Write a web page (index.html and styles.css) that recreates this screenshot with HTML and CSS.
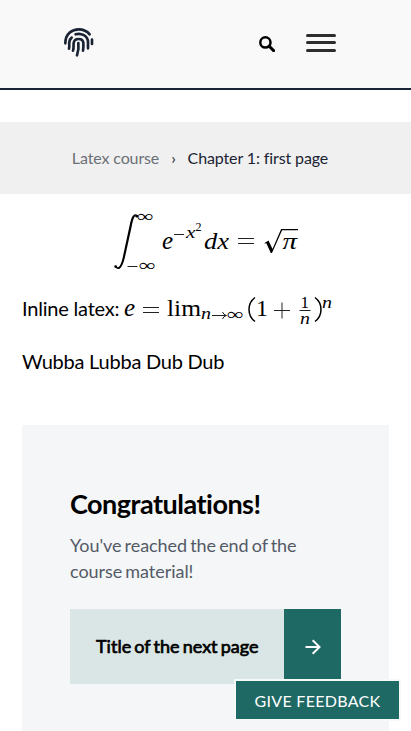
FILE: index.html
```html
<!DOCTYPE html>
<html lang="en">
<head>
<meta charset="utf-8">
<meta name="viewport" content="width=device-width">
<title>Chapter 1: first page</title>
<link rel="stylesheet" href="styles.css">
</head>
<body>
<header class="topbar">
  <svg class="logo" viewBox="0 0 90 90" fill="none" stroke="#1a2333" stroke-width="8" stroke-linecap="round">
    <path d="M4 46C4 16 26 4 44 4c14 0 25 5 33 15"/>
    <path d="M84 35v13"/>
    <path d="M15 62c2-7 0-12 1-20 1-6 3-10 7-13M35 19c16-5 37 4 37 24v18"/>
    <path d="M27 68c3-9 1-15 2-23 2-16 28-16 29 0 1 10 0 15-1 23"/>
    <path d="M43 45c2 16 0 26-4 37"/>
  </svg>
  <svg class="search" viewBox="0 0 16 16" fill="none" stroke="#000" stroke-width="2.5">
    <circle cx="6.4" cy="6.4" r="5.1"/><path d="M10 10l4.6 4.6" stroke-width="3" stroke-linecap="round"/>
  </svg>
  <div class="menu"><span></span><span></span><span></span></div>
</header>
<nav class="crumbs"><a>Latex course</a><span class="sep">›</span><span>Chapter 1: first page</span></nav>
<main>
  <svg class="formula" viewBox="0 -10 190 76" width="190" height="76">
    <path d="M5 55.2c3 3 5-1 7-10L18.7 14C20.7 4 23.5 1.400 26.500 4.500C24 3.500 22.400 7 20.800 15L14 46C11.400 57 8 60 5 57z"/>
    <circle cx="4.700" cy="55.600" r="1.400"/><circle cx="25.800" cy="5.200" r="1.400"/>
    <text x="26" y="10.500" font-size="17" textLength="17" lengthAdjust="spacingAndGlyphs">∞</text>
    <path d="M16.500 55.500h10" class="rule"/>
    <text x="28" y="60" font-size="17" textLength="17" lengthAdjust="spacingAndGlyphs">∞</text>
    <text class="it" x="51" y="37.500" font-size="25">e</text>
    <path d="M63 23.500h10" class="rule"/>
    <text class="it" x="75" y="27" font-size="17" textLength="9.500" lengthAdjust="spacingAndGlyphs">x</text>
    <text x="84.500" y="20" font-size="12">2</text>
    <text class="it" x="93" y="37.500" font-size="24" textLength="25" lengthAdjust="spacingAndGlyphs">dx</text>
    <path d="M127 27.500h16M127 32.500h16" class="rule"/>
    <path d="M153.500 32l4-2.500 4 8.500 8.600-20H187v1.200h-15.900L161 42h-1.200L155.200 32l-1.200.8z"/>
    <text class="it" x="171.500" y="37.500" font-size="24" textLength="14.500" lengthAdjust="spacingAndGlyphs">π</text>
  </svg>
  <p class="inline-math"><span>Inline latex:</span> <svg class="limit" viewBox="0 0 212 40" width="212" height="40">
    <text class="it" x="1" y="26" font-size="25">e</text>
    <path d="M20 17.500h16M20 22.500h16" class="rule"/>
    <text x="44" y="26" font-size="24" textLength="34" lengthAdjust="spacingAndGlyphs">lim</text>
    <text class="it" x="78" y="29" font-size="17" textLength="10" lengthAdjust="spacingAndGlyphs">n</text>
    <path d="M89 25.500h14M99.500 22q1 3 4 3.500q-3 .5-4 3.500" class="rule"/>
    <text x="104" y="30" font-size="17" textLength="17" lengthAdjust="spacingAndGlyphs">∞</text>
    <path d="M132 7.500c-8 6-8 18 0 24" class="paren"/>
    <text x="133" y="26" font-size="24">1</text>
    <path d="M151 20.500h16M159 12.500v16" class="rule"/>
    <text x="177.500" y="18" font-size="17">1</text>
    <path d="M176.500 20.500h11" class="rule"/>
    <text class="it" x="177" y="34" font-size="17" textLength="10" lengthAdjust="spacingAndGlyphs">n</text>
    <path d="M192 7.500c8 6 8 18 0 24" class="paren"/>
    <text class="it" x="199" y="17.500" font-size="17" textLength="10" lengthAdjust="spacingAndGlyphs">n</text>
  </svg></p>
  <p class="copy">Wubba Lubba Dub Dub</p>
  <section class="card">
    <h2>Congratulations!</h2>
    <p>You've reached the end of the course material!</p>
    <a class="next"><span class="title"><span>Title of the next page</span></span><span class="arrow"><svg width="16" height="16" viewBox="0 0 16 16" fill="none" stroke="#fff" stroke-width="2"><path d="M.5 8H14M7.700 1.200L14.500 8l-6.800 6.800"/></svg></span></a>
  </section>
</main>
<button class="feedback">GIVE FEEDBACK</button>
</body>
</html>
```
FILE: styles.css
```css
* { box-sizing: border-box; }
html { overflow: hidden; }
body { margin: 0; height: 731px; overflow: hidden; background: #fff; color: #000; font-family: Lato, sans-serif; }
.topbar { height: 90px; background: #f9f9f9; border-bottom: 2px solid #1a2333; display: flex; align-items: flex-start; padding: 28px 75px 0 64px; }
.logo { width: 30px; height: 30px; }
.search { width: 16px; height: 16px; margin: 8px 0 0 165px; }
.menu { display: flex; flex-direction: column; gap: 4px; width: 30px; margin: 6px 0 0 31px; }
.menu span { height: 3px; border-radius: 2px; background: #2d2d2d; }
.menu span:last-child { margin-top: 1px; }
.crumbs { margin-top: 32px; height: 72px; background: #f0f0f0; display: flex; justify-content: center; align-items: center; font-size: 16px; letter-spacing: -.12px; color: #1a2333; padding: 0 11px 2px 0; }
.crumbs a { color: #6b6f76; }
.crumbs .sep { margin: 0 12px; }
main { padding: 0 22px; }
svg text { font-family: "Liberation Serif", serif; }
svg .it { font-style: italic; }
svg .rule { fill: none; stroke: #222; stroke-width: 1; }
svg .paren { fill: none; stroke: #000; stroke-width: 1.500px; }
.formula { display: block; margin: 7px 0 0 89px; }
.inline-math { display: flex; align-items: center; height: 40px; margin: 13px 0 0; font-size: 20px; line-height: 30px; letter-spacing: -.2px; white-space: nowrap; }
.inline-math span { padding-bottom: 4px; }
.limit { flex: none; margin-left: 4px; letter-spacing: 0; }
.copy { margin: 16px 0 0; font-size: 20px; line-height: 30px; letter-spacing: -.24px; }
.card { margin-top: 49px; height: 310px; background: #f4f6f8; padding: 63px 48px 0; }
h2 { margin: 0; font-size: 27px; line-height: 32px; letter-spacing: -.5px; font-weight: 700; }
.card p { margin: 12px 0 0; font-size: 18px; line-height: 26px; letter-spacing: -.04px; word-spacing: -1.500px; color: #535a66; }
.next { display: flex; width: 271px; height: 75px; margin-top: 25px; }
.title { flex: 1; display: flex; align-items: center; padding: 0 0 2px 26px; background: #dae6e5; font-size: 18px; letter-spacing: .02px; word-spacing: -1.500px; -webkit-text-stroke: .7px #000; white-space: nowrap; }
.arrow { width: 57px; background: #1f6964; display: flex; align-items: center; justify-content: center; }
.feedback { position: fixed; left: 234px; top: 679px; width: 167px; height: 42px; padding: 0; border: 2px solid #f5faf9; background: #1f6964; color: #fff; font: 16px Lato, sans-serif; letter-spacing: .3px; }
```
